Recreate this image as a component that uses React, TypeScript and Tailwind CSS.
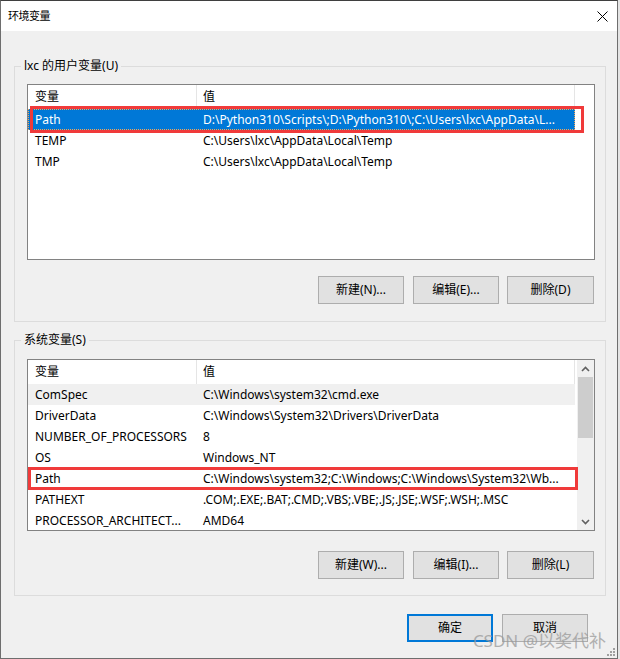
import React from 'react';

type EnvRow = { name: string; value: string };

const userVars: EnvRow[] = [
  { name: 'Path', value: String.raw`D:\Python310\Scripts\;D:\Python310\;C:\Users\lxc\AppData\L...` },
  { name: 'TEMP', value: String.raw`C:\Users\lxc\AppData\Local\Temp` },
  { name: 'TMP', value: String.raw`C:\Users\lxc\AppData\Local\Temp` },
];

const systemVars: EnvRow[] = [
  { name: 'ComSpec', value: String.raw`C:\Windows\system32\cmd.exe` },
  { name: 'DriverData', value: String.raw`C:\Windows\System32\Drivers\DriverData` },
  { name: 'NUMBER_OF_PROCESSORS', value: '8' },
  { name: 'OS', value: 'Windows_NT' },
  { name: 'Path', value: String.raw`C:\Windows\system32;C:\Windows;C:\Windows\System32\Wb...` },
  { name: 'PATHEXT', value: '.COM;.EXE;.BAT;.CMD;.VBS;.VBE;.JS;.JSE;.WSF;.WSH;.MSC' },
  { name: 'PROCESSOR_ARCHITECT...', value: 'AMD64' },
];

const Button: React.FC<{ label: string; className?: string; primary?: boolean }> = ({ label, className = '', primary }) => (
  <button
    className={
      'h-[28px] w-[86px] shrink-0 bg-[#e1e1e1] text-[12px] leading-none text-black ' +
      (primary ? 'border-2 border-[#0078d7] ' : 'border border-[#adadad] ') +
      className
    }
  >
    {label}
  </button>
);

const ListHeader: React.FC = () => (
  <div className="flex h-[24px] shrink-0 items-center bg-white">
    <div className="flex h-full w-[169px] items-center border-r border-[#e5e5e5] pl-[7px]">变量</div>
    <div className="flex h-full w-[378px] items-center border-r border-[#e5e5e5] pl-[6px]">值</div>
  </div>
);

const Row: React.FC<{ row: EnvRow; selected?: boolean; hover?: boolean }> = ({ row, selected, hover }) => (
  <div
    className={
      'flex h-[21px] w-[547px] shrink-0 items-center whitespace-nowrap ' +
      (selected
        ? 'bg-[#0078d7] text-white outline-1 outline-dotted outline-[#f2a65a] -outline-offset-1 '
        : hover
        ? 'bg-[#f0f0f0] '
        : '')
    }
  >
    <div className="w-[169px] overflow-hidden pl-[7px]">{row.name}</div>
    <div className="w-[378px] overflow-hidden pl-[6px]">{row.value}</div>
  </div>
);

const Chevron: React.FC<{ down?: boolean }> = ({ down }) => (
  <svg width="9" height="6" viewBox="0 0 9 6" className={down ? 'rotate-180' : ''}>
    <path d="M1 5 L4.5 1.5 L8 5" fill="none" stroke="#606060" strokeWidth="1.6" />
  </svg>
);

const GroupBox: React.FC<{ title: string; mt: string; children: React.ReactNode }> = ({ title, mt, children }) => (
  <div className={'ml-[13px] flex w-[592px] flex-col border border-[#dcdcdc] pl-[12px] pr-[10px] ' + mt}>
    <span className="-ml-[6px] -mt-[9px] self-start bg-[#f0f0f0] px-[3px] leading-[16px]">{title}</span>
    {children}
  </div>
);

export default function App() {
  return (
    <div className="h-[659px] w-[620px] bg-[#e4e4e4] font-['Noto_Sans','Noto_Sans_CJK_SC',sans-serif] text-[12px] text-black">
      <div className="relative flex h-[659px] w-[618px] flex-col border border-[#6e6e6e] border-t-[#3f3f3f] bg-[#f0f0f0]">
        {/* Title bar */}
        <div className="flex h-[30px] shrink-0 items-center justify-between bg-white pl-[7px] pr-[9px]">
          <span className="text-[11px] tracking-[-0.5px]">环境变量</span>
          <svg width="11" height="11" viewBox="0 0 11 11">
            <path d="M0.5 0.5 L10.5 10.5 M10.5 0.5 L0.5 10.5" stroke="#000" strokeWidth="1" />
          </svg>
        </div>

        {/* User variables */}
        <GroupBox title="lxc 的用户变量(U)" mt="mt-[35px]">
          <div className="relative mt-[10px] flex h-[176px] flex-col border border-[#828282] bg-white">
            <ListHeader />
            {userVars.map((r, i) => (
              <Row key={r.name} row={r} selected={i === 0} />
            ))}
            <div className="pointer-events-none absolute left-[2px] top-[21px] h-[27px] w-[554px] border-[3px] border-[#f03a3a]" />
          </div>
          <div className="mt-[16px] flex justify-end pr-[1px]">
            <Button label="新建(N)..." />
            <Button label="编辑(E)..." className="ml-[9px]" />
            <Button label="删除(D)" className="ml-[8px] w-[87px]" />
          </div>
          <div className="h-[17px]" />
        </GroupBox>

        {/* System variables */}
        <GroupBox title="系统变量(S)" mt="mt-[18px]">
          <div className="relative mt-[11px] flex h-[172px] border border-[#828282] bg-white">
            <div className="flex flex-1 flex-col overflow-hidden">
              <ListHeader />
              {systemVars.map((r, i) => (
                <Row key={r.name} row={r} hover={i === 0} />
              ))}
            </div>
            <div className="flex w-[17px] shrink-0 flex-col bg-[#f0f0f0]">
              <div className="flex h-[17px] items-center justify-center">
                <Chevron />
              </div>
              <div className="mx-[1px] h-[61px] bg-[#cdcdcd]" />
              <div className="flex-1" />
              <div className="flex h-[17px] items-center justify-center">
                <Chevron down />
              </div>
            </div>
            <div className="pointer-events-none absolute left-0 top-[107px] h-[23px] w-[550px] border-[3px] border-[#f03a3a]" />
          </div>
          <div className="mt-[20px] flex justify-end pr-[1px]">
            <Button label="新建(W)..." />
            <Button label="编辑(I)..." className="ml-[9px]" />
            <Button label="删除(L)" className="ml-[8px] w-[87px]" />
          </div>
          <div className="h-[16px]" />
        </GroupBox>

        {/* Dialog buttons */}
        <div className="mt-[18px] flex justify-end gap-[9px] pr-[29px]">
          <Button label="确定" primary />
          <Button label="取消" />
        </div>

        {/* Watermark */}
        <span className="pointer-events-none absolute bottom-[9px] right-[11px] text-[17px] leading-none text-[#9a9a9a] opacity-75">
          CSDN @以奖代补
        </span>

        {/* Resize grip */}
        <svg className="absolute bottom-[2px] right-[2px]" width="8" height="8" viewBox="0 0 8 8">
          <g fill="#a0a0a0">
            <rect x="6" y="0" width="2" height="2" />
            <rect x="3" y="3" width="2" height="2" />
            <rect x="6" y="3" width="2" height="2" />
            <rect x="0" y="6" width="2" height="2" />
            <rect x="3" y="6" width="2" height="2" />
            <rect x="6" y="6" width="2" height="2" />
          </g>
        </svg>
      </div>
    </div>
  );
}
